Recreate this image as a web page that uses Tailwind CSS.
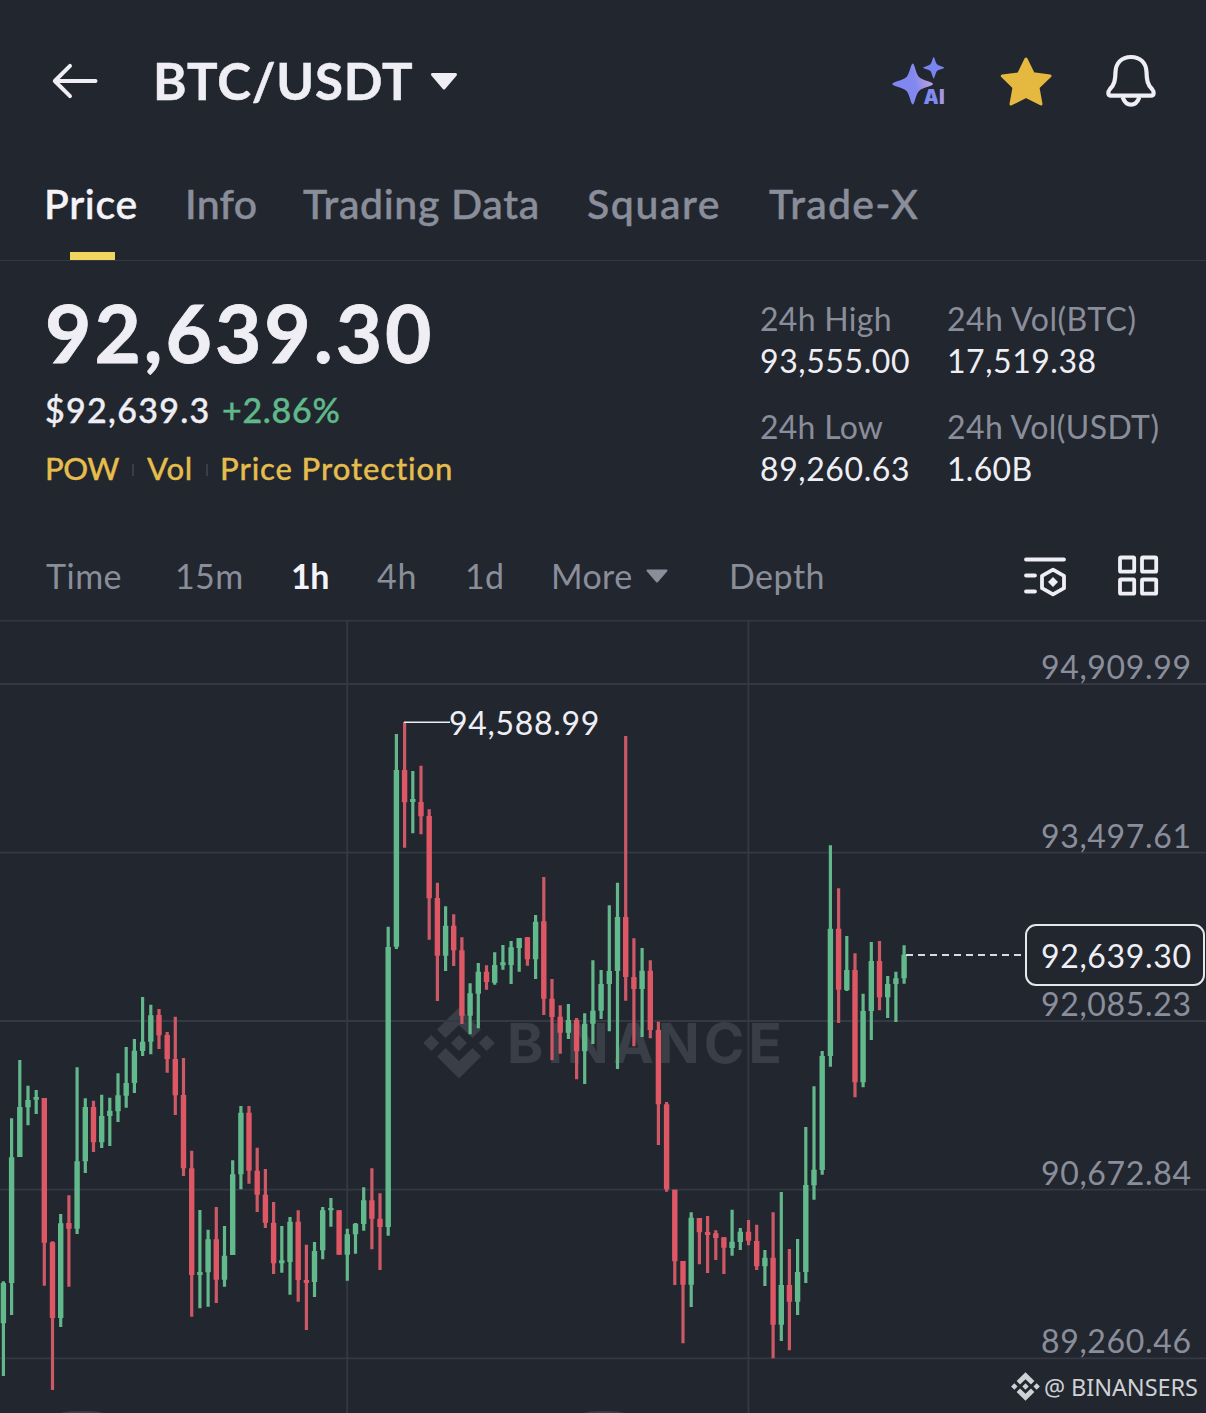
<!DOCTYPE html>
<html lang="en">
<head>
<meta charset="utf-8">
<title>BTC/USDT</title>
<script src="https://cdn.jsdelivr.net/npm/@tailwindcss/browser@4"></script>
</head>
<body class="w-[1206px] h-[1413px] overflow-hidden bg-[#22262f] text-[#eeeef4] font-['Lato',sans-serif] whitespace-nowrap">

<header class="h-[162px] flex items-center">
  <svg class="ml-[50px] w-[50px] h-[40px]" viewBox="50 61 50 40" fill="none" stroke="#eeeef4" stroke-width="4" stroke-linecap="round" stroke-linejoin="round"><path d="M95.5 81H55M70 65.800L54.800 81L70 96.200"/></svg>
  <h1 class="ml-[53px] w-[276px] text-[51px] leading-[60px] font-bold tracking-[0.800px] [-webkit-text-stroke:0.500px_#eeeef4]">BTC/USDT</h1>
  <svg class="w-[30px] h-[22px]" viewBox="429 70 30 22" fill="#eeeef4" stroke="#eeeef4" stroke-width="3" stroke-linejoin="round"><path d="M432.500 74.500H455.500L444 88Z"/></svg>
  <div class="relative ml-[431px] w-[60px] h-[60px]">
    <svg class="w-[60px] h-[60px]" viewBox="890 51 60 60">
      <defs><linearGradient id="spark" x1="0" y1="0.600" x2="1" y2="0.400"><stop offset="0" stop-color="#7f86f5"/><stop offset="0.550" stop-color="#8288ee"/><stop offset="1" stop-color="#c3a3dc"/></linearGradient></defs>
      <path fill="url(#spark)" d="M912.700 63.500C914.500 63.500 915.800 73.500 919 77C922.500 80.500 933 82 933 84C933 86 922 87.500 919 91C915.800 94.500 914.500 104.500 912.700 104.500C911 104.500 909.700 94.500 906.500 91C903.500 87.500 892.300 86 892.300 84C892.300 82 903 80.500 906.500 77C909.700 73.500 911 63.500 912.700 63.500Z"/>
      <path fill="#7884ef" d="M933.700 57C934.500 57 935.500 62.500 937 64.300C938.500 66 944.200 66.800 944.200 67.700C944.200 68.600 938.500 69.400 937 71.100C935.500 73 934.500 78.500 933.700 78.500C932.900 78.500 931.900 73 930.400 71.100C929 69.400 923.200 68.600 923.200 67.700C923.200 66.800 929 66 930.400 64.300C931.900 62.500 932.900 57 933.700 57Z"/>
      <text x="923.500" y="103.600" class="font-['Inter',sans-serif] text-[19.500px] font-black [paint-order:stroke]" stroke="#22262f" stroke-width="4"><tspan fill="#7f8bf0">A</tspan><tspan fill="#a795e2">I</tspan></text>
    </svg>
  </div>
  <svg class="ml-[46px] w-[60px] h-[60px]" viewBox="996 51 60 60" fill="#e5b93f" stroke="#e5b93f" stroke-width="3" stroke-linejoin="round"><path d="M1026 59L1033.300 73.800L1050 76L1038 87.500L1041 104L1026 96.500L1011 104L1014 87.500L1002.300 76L1018.700 73.800Z"/></svg>
  <svg class="ml-[45px] w-[60px] h-[60px]" viewBox="1101 51 60 60" fill="none" stroke="#eeeef4" stroke-width="4.200" stroke-linejoin="round"><path d="M1131 57C1121.500 57 1115.800 63 1115.500 72C1115.300 80 1114.500 84.500 1110 89C1107.500 92 1107.800 95.700 1111 95.700H1151C1154.200 95.700 1154.500 92 1152 89C1147.500 84.500 1146.700 80 1146.500 72C1146.200 63 1140.500 57 1131 57ZM1122.700 97.500C1124.500 102.200 1127 104.700 1131 104.700S1137.500 102.200 1139.300 97.500"/></svg>
</header>

<nav class="h-[99px] pl-[44px] pt-[20px] flex border-b-[1.500px] border-[#343842] text-[41px] leading-[44px] font-medium text-[#8a8e9a] [-webkit-text-stroke:0.500px_currentColor]">
  <div class="relative w-[141px] text-[#f4f4f8] tracking-[0.700px]">Price<span class="absolute left-[26px] top-[70px] w-[45px] h-[8px] bg-[#f1d45e]"></span></div>
  <div class="w-[118px] tracking-[0.300px]">Info</div>
  <div class="w-[284px] tracking-[0.650px]">Trading Data</div>
  <div class="w-[182px] tracking-[1.600px]">Square</div>
  <div class="tracking-[1.300px]">Trade-X</div>
</nav>

<section class="h-[270px] pl-[45px] flex">
  <div class="w-[715px] pt-[31px]">
    <div class="text-[80px] leading-[80px] font-bold tracking-[3px] [-webkit-text-stroke:0.800px_currentColor]">92,639.30</div>
    <div class="mt-[18px] flex text-[34px] leading-[40px] font-medium [-webkit-text-stroke:0.400px_currentColor]">
      <span class="w-[177px] tracking-[1.300px]">$92,639.3</span><span class="text-[#5fb98a] tracking-[0.700px]">+2.86%</span>
    </div>
    <div class="mt-[18px] flex items-center text-[31px] leading-[40px] font-medium text-[#e5bd4d] [-webkit-text-stroke:0.300px_currentColor]">
      <span class="w-[87px] tracking-[-0.500px]">POW</span><i class="mt-[4px] w-[2px] h-[12px] bg-[#3a3e48]"></i>
      <span class="ml-[13px] w-[59px] tracking-[0.700px]">Vol</span><i class="mt-[4px] w-[2px] h-[12px] bg-[#3a3e48]"></i>
      <span class="ml-[12px] tracking-[0.900px]">Price Protection</span>
    </div>
  </div>
  <dl class="pt-[37px] grid grid-cols-[187px_220px] gap-y-[24px] content-start text-[32px] leading-[42px]">
    <div><dt class="text-[#8a8e9a] tracking-[0.300px]">24h High</dt><dd class="tracking-[0.600px]">93,555.00</dd></div>
    <div><dt class="text-[#8a8e9a] tracking-[0.500px]">24h Vol(BTC)</dt><dd class="tracking-[0.550px]">17,519.38</dd></div>
    <div><dt class="text-[#8a8e9a] tracking-[0.250px]">24h Low</dt><dd class="tracking-[0.600px]">89,260.63</dd></div>
    <div><dt class="text-[#8a8e9a] tracking-[0.400px]">24h Vol(USDT)</dt><dd class="tracking-[0.300px]">1.60B</dd></div>
  </dl>
</section>

<div class="h-[89px] pl-[46px] flex items-center text-[34px] text-[#8a8e9a]">
  <span class="w-[129px] tracking-[0.500px]">Time</span>
  <span class="w-[116px] tracking-[0.400px]">15m</span>
  <span class="w-[86px] font-bold tracking-[-0.500px] text-[#f4f4f8]">1h</span>
  <span class="w-[88px] tracking-[0.700px]">4h</span>
  <span class="w-[86px] tracking-[0.300px]">1d</span>
  <span class="w-[95px] tracking-[0.400px]">More</span>
  <svg class="w-[22px] h-[14px]" viewBox="0 0 22 14" fill="#8a8e9a" stroke="#8a8e9a" stroke-width="2" stroke-linejoin="round"><path d="M1.500 1.500H20.500L11 12.500Z"/></svg>
  <span class="ml-[61px] w-[293px] tracking-[0.500px]">Depth</span>
  <svg class="w-[46px] h-[44px]" viewBox="1021 554.500 46 44" fill="none" stroke="#eeeef4" stroke-width="3.800" stroke-linecap="round" stroke-linejoin="round"><path d="M1025 560H1063M1025 576H1034M1025 592H1034M1052 570.200L1063 576.300V588.700L1052 594.800L1041 588.700V576.300Z"/><path d="M1052 577.500L1057 582.500L1052 587.500L1047 582.500Z" fill="#eeeef4" stroke="none"/></svg>
  <svg class="ml-[48px] w-[44px] h-[44px]" viewBox="1115 554.500 44 44" fill="none" stroke="#eeeef4" stroke-width="3.800"><rect x="1119" y="558" width="14.200" height="14.200" rx="1"/><rect x="1141" y="558" width="14.200" height="14.200" rx="1"/><rect x="1119" y="580" width="14.200" height="14.200" rx="1"/><rect x="1141" y="580" width="14.200" height="14.200" rx="1"/></svg>
</div>

<main class="relative h-[793px] overflow-hidden">
  <div class="absolute left-[423px] top-[386.500px] flex items-center text-[#3a3e46]">
    <svg class="w-[72px] h-[72px]" viewBox="-36 -36 72 72" fill="currentColor"><g id="mark"><path d="M0-35.500L22-13.500L13.500-5L0-18L-13.500-5L-22-13.500Z"/><path d="M0 35.500L22 13.500L13.500 5L0 18L-13.500 5L-22 13.500Z"/><path d="M0-8L8 0L0 8L-8 0ZM-27.700-8L-19.700 0L-27.700 8L-35.700 0ZM27.700-8L35.700 0L27.700 8L19.700 0Z"/></g></svg>
    <span class="ml-[12px] text-[55px] leading-[60px] font-bold tracking-[4px] font-['Inter',sans-serif]">BINANCE</span>
  </div>

  <svg class="absolute left-0 top-0 w-[1206px] h-[793px]" viewBox="0 620 1206 793">
    <g stroke="#353943" stroke-width="1.800"><path d="M0 684H1206M0 852.700H1206M0 1021H1206M0 1189.700H1206M0 1358.300H1206M347.200 620V1413M748.400 620V1413"/></g>
    <path d="M0 620.700H1206" stroke="#343842" stroke-width="1.500"/>
    <path id="up-wick" stroke="#62b78b" stroke-width="3.200"/><path id="up-body" stroke="#62b98c" stroke-width="5.400"/>
    <path id="dn-wick" stroke="#cd5967" stroke-width="3.200"/><path id="dn-body" stroke="#dd5765" stroke-width="5.400"/>
    <path d="M404 722.200H450" stroke="#eeeef4" stroke-width="1.600"/>
    <path d="M906 955H1025" stroke="#d8dae0" stroke-width="2" stroke-dasharray="7 5"/>
    <ellipse cx="82" cy="1415" rx="26" ry="4" fill="#3a3e48"/><ellipse cx="604" cy="1415" rx="24" ry="4" fill="#3a3e48"/>
  </svg>

  <div class="absolute left-[449px] top-[82px] text-[32px] leading-[42px] tracking-[0.700px]">94,588.99</div>

  <div class="absolute right-0 top-[26px] w-[165px] flex flex-col gap-[126.500px] text-[32px] leading-[42px] tracking-[0.650px] text-[#8a8e9a]">
    <span>94,909.99</span><span>93,497.61</span><span>92,085.23</span><span>90,672.84</span><span>89,260.46</span>
  </div>

  <div class="absolute left-[1025px] top-[304px] w-[180px] h-[62px] pl-[14px] pt-[2px] flex items-center rounded-[11px] border-2 border-[#e6e7ec] bg-[#22262f] text-[32px] tracking-[0.650px]">92,639.30</div>

  <div class="absolute left-[1011px] top-[750.500px] flex items-center text-[#cfd1d5] font-['Noto_Sans',sans-serif] text-[23.500px] leading-[32px] tracking-[-0.080px]">
    <svg class="w-[29px] h-[29px]" viewBox="-36 -36 72 72" fill="currentColor"><use href="#mark"/></svg>
    <span class="ml-[4px]">@ BINANSERS</span>
  </div>
</main>

<script>
// Hourly candles: direction, high, body top, body bottom, low (chart y coordinates)
const candles = `
g 1281.3 1283 1323.3 1376
g 1118.3 1157.3 1283 1315
g 1060 1107 1157 1157
g 1085.7 1100 1107.3 1125.3
g 1090 1097 1099.7 1114
r 1098 1098 1242.7 1285.7
r 1241.3 1242.3 1318 1390
g 1214 1223.3 1318 1327
r 1195.3 1223 1228.7 1286.7
g 1067.3 1161.3 1228.7 1234
g 1098.3 1107 1161.3 1173
r 1100.7 1107 1142.3 1152
g 1094.7 1116 1142.3 1148
g 1097.7 1110.7 1116 1146
g 1073.3 1095.3 1111.3 1122
g 1047 1083 1095.7 1107.7
g 1039 1050.7 1083 1093
g 997 1041.7 1051 1056
g 1004.7 1015.3 1041.7 1054.3
r 1009 1015 1035.3 1049
r 1032 1035 1059 1072.7
r 1016.7 1059 1095.3 1115
r 1058 1095 1168.3 1176
r 1150.7 1168.3 1275 1316.7
g 1210 1272 1275 1308.3
g 1229.7 1239.3 1272.3 1306.7
r 1207 1239.3 1279.7 1303
g 1226 1255.7 1279.7 1286.7
g 1160.3 1174.3 1255 1255
g 1106 1112.7 1174.3 1189.3
r 1106 1112.7 1170.7 1183.7
r 1147.7 1170.7 1194.7 1212
r 1169 1194.7 1222.7 1228
r 1202 1222.7 1263.3 1274
g 1226 1260.3 1263.3 1272.7
g 1217 1221.7 1262 1294.7
r 1210.3 1221.7 1280 1301.7
r 1244.7 1280 1283 1330
g 1242 1251 1282 1297
g 1207 1210.3 1250.3 1259.3
g 1198 1208 1210.3 1226.7
r 1210.3 1210.3 1254.7 1254.7
g 1228.7 1234.3 1254.7 1280.7
g 1223 1223.7 1234.3 1253.7
g 1187.3 1200.3 1224 1230.7
r 1168.3 1200.3 1218.7 1249.3
r 1193.3 1218.7 1227 1270
g 926.7 947 1227 1235.7
g 734 770 946.7 949
r 722 770 802.3 847.7
g 771 799 802 833.3
r 765.7 802 816.3 834.3
r 809.3 816 898.3 939.7
r 882.7 898 955.7 1001
g 906.3 925.7 955.7 971
r 914.3 925.7 950.3 966
r 937.3 950.3 1015.7 1024
g 983.3 993.3 1015.7 1034.3
g 963 971.7 993.7 1028.3
r 965.3 971.7 982 989.7
g 952.3 965 982.7 984.7
g 945 962.3 965.3 969.7
g 941 947.3 965 984
g 938 938 948 971.7
r 937 937.3 959.3 965.7
g 915 921.7 959.3 979
r 877 921.3 998.7 1015
r 979 998.7 1017 1060
r 1005.3 1016.7 1032.7 1053.7
g 1004 1020 1032.7 1039
r 1018 1020 1051.3 1079.3
g 1013.3 1023.7 1051.3 1084
g 960.3 1010.7 1023.7 1044
g 970 984 1010.7 1019
g 905.3 971 984 1031.3
g 882.7 917 971 1069
r 736 917 977 1000.7
r 938.3 977 989 1046.3
g 948 970.7 989 1037
r 960.3 970.7 1030 1038.3
r 1021.7 1030 1104.3 1145
r 1102 1104.3 1189.3 1191.7
r 1189.7 1189.7 1261.3 1285
r 1261 1261 1284.7 1343.3
g 1212.3 1217.7 1284.7 1307
r 1218 1218 1232.3 1264.3
r 1216 1232 1235 1273
r 1230.3 1233.3 1238 1260
r 1237.3 1237.3 1247.7 1274
g 1209.7 1241.7 1248 1255.7
g 1228 1231.7 1242 1250
r 1220 1231.7 1240.7 1245.3
r 1224.7 1241 1266.3 1270
g 1250 1257.7 1266.3 1286
r 1212.3 1257.7 1324.7 1358.3
g 1192 1285 1324.7 1341
r 1249 1285 1301.7 1350.3
g 1239 1272 1301.7 1315
g 1127 1185 1272 1283
g 1086.3 1169.7 1185.3 1199.7
g 1051 1056 1170 1174.7
g 845.3 928.7 1056 1066.7
r 888.3 928.7 989.7 1023
g 936 970 990 991
r 953.3 970 1082.3 1097.3
g 993.7 1011 1082.3 1087.3
g 942 961 1011 1040
r 941 961 997.3 1010.3
g 976 984 997.3 1018
g 971.7 978.3 984 1022
g 945.3 954.7 978.3 983.7`.trim().split('\n');

const d = { g: ['', ''], r: ['', ''] };
candles.forEach((row, i) => {
  const [dir, high, top, bottom, low] = row.split(' ');
  const x = (3.4 + i * 8.188).toFixed(1);
  d[dir][0] += `M${x} ${high}V${low}`;
  d[dir][1] += `M${x} ${top}V${bottom}`;
});
document.getElementById('up-wick').setAttribute('d', d.g[0]);
document.getElementById('up-body').setAttribute('d', d.g[1]);
document.getElementById('dn-wick').setAttribute('d', d.r[0]);
document.getElementById('dn-body').setAttribute('d', d.r[1]);
</script>
</body>
</html>
